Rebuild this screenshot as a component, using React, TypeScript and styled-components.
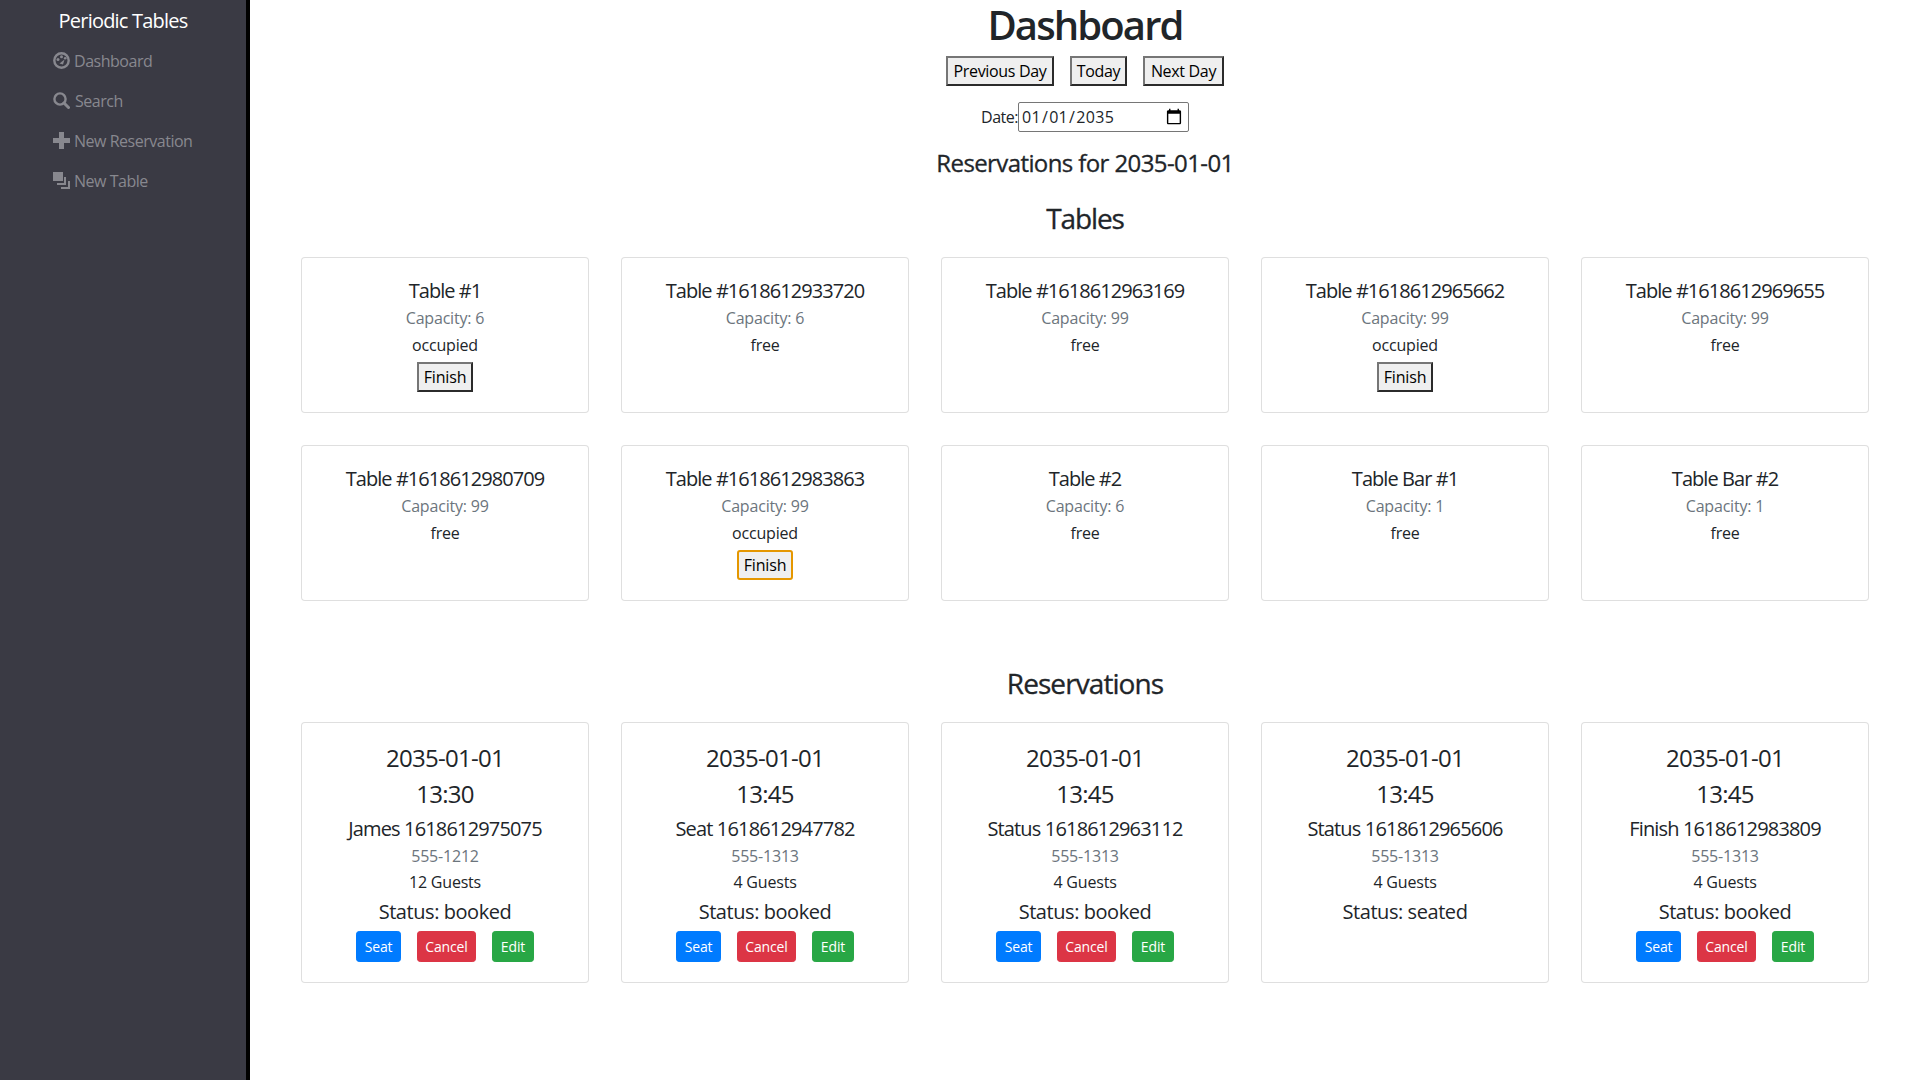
import React from 'react';
import styled, { createGlobalStyle } from 'styled-components';

const tables = [
    { name: '#1', capacity: 6, occupied: true },
    { name: '#1618612933720', capacity: 6 },
    { name: '#1618612963169', capacity: 99 },
    { name: '#1618612965662', capacity: 99, occupied: true },
    { name: '#1618612969655', capacity: 99 },
    { name: '#1618612980709', capacity: 99 },
    { name: '#1618612983863', capacity: 99, occupied: true, focused: true },
    { name: '#2', capacity: 6 },
    { name: 'Bar #1', capacity: 1 },
    { name: 'Bar #2', capacity: 1 },
];

const reservations = [
    { time: '13:30', name: 'James 1618612975075', phone: '555-1212', guests: 12, status: 'booked' },
    { time: '13:45', name: 'Seat 1618612947782', phone: '555-1313', guests: 4, status: 'booked' },
    { time: '13:45', name: 'Status 1618612963112', phone: '555-1313', guests: 4, status: 'booked' },
    { time: '13:45', name: 'Status 1618612965606', phone: '555-1313', guests: 4, status: 'seated' },
    { time: '13:45', name: 'Finish 1618612983809', phone: '555-1313', guests: 4, status: 'booked' },
];

const DashboardIcon = () => (
    <svg width="17" height="17" viewBox="0 0 17 17">
        <circle cx="8.5" cy="8.5" r="7.2" fill="none" stroke="currentColor" strokeWidth="2.4" />
        <circle cx="5" cy="7.5" r="1.5" fill="currentColor" />
        <circle cx="8.5" cy="4.8" r="1.5" fill="currentColor" />
        <circle cx="12.2" cy="6.2" r="1.3" fill="currentColor" />
        <path d="M6.5 11.5 L11.5 7.5 L10 12.5 Z" fill="currentColor" />
    </svg>
);

const SearchIcon = () => (
    <svg width="17" height="17" viewBox="0 0 17 17">
        <circle cx="7" cy="7" r="5.6" fill="none" stroke="currentColor" strokeWidth="2.4" />
        <path d="M11 11 L15.5 15.5" stroke="currentColor" strokeWidth="3" strokeLinecap="round" />
    </svg>
);

const PlusIcon = () => (
    <svg width="17" height="17" viewBox="0 0 17 17">
        <path d="M6 0h5v6h6v5h-6v6H6v-6H0V6h6z" fill="currentColor" />
    </svg>
);

const LayersIcon = () => (
    <svg width="17" height="17" viewBox="0 0 17 17">
        <path d="M0 0h10v9H0z" fill="currentColor" />
        <path d="M11 5h2v8H4v-2h7z" fill="currentColor" />
        <path d="M15 9h2v8H8v-2h7z" fill="currentColor" />
    </svg>
);

const navItems = [
    { label: 'Dashboard', icon: <DashboardIcon /> },
    { label: 'Search', icon: <SearchIcon />, gap: 5 },
    { label: 'New Reservation', icon: <PlusIcon /> },
    { label: 'New Table', icon: <LayersIcon /> },
];

const App: React.FC = () => {
    return (
        <Layout>
            <GlobalStyle />
            <Sidebar>
                <Brand>Periodic Tables</Brand>
                <Nav>
                    {navItems.map(item => (
                        <NavItem key={item.label} $gap={item.gap}>
                            {item.icon}
                            <span>{item.label}</span>
                        </NavItem>
                    ))}
                </Nav>
            </Sidebar>
            <Main>
                <PageTitle>Dashboard</PageTitle>
                <DayButtons>
                    <PlainButton $width={108}>Previous Day</PlainButton>
                    <PlainButton $width={57}>Today</PlainButton>
                    <PlainButton $width={81}>Next Day</PlainButton>
                </DayButtons>
                <DateRow>
                    <DateLabel htmlFor="date">Date:</DateLabel>
                    <DateInput id="date" type="date" defaultValue="2035-01-01" />
                </DateRow>
                <DayTitle>Reservations for 2035-01-01</DayTitle>
                <SectionTitle>Tables</SectionTitle>
                <CardGrid>
                    {tables.map(table => (
                        <TableCard key={table.name}>
                            <CardTitle>Table {table.name}</CardTitle>
                            <TableMuted>Capacity: {table.capacity}</TableMuted>
                            <CardLine>{table.occupied ? 'occupied' : 'free'}</CardLine>
                            {table.occupied && <FinishButton $focused={table.focused}>Finish</FinishButton>}
                        </TableCard>
                    ))}
                </CardGrid>
                <ReservationTitle>Reservations</ReservationTitle>
                <CardGrid>
                    {reservations.map(res => (
                        <ReservationCard key={res.name}>
                            <DateText>2035-01-01</DateText>
                            <DateText>{res.time}</DateText>
                            <ResName>{res.name}</ResName>
                            <Phone>{res.phone}</Phone>
                            <CardLine>{res.guests} Guests</CardLine>
                            <Status>Status: {res.status}</Status>
                            {res.status === 'booked' && (
                                <Actions>
                                    <ActionButton $color="#007bff" $width={45}>Seat</ActionButton>
                                    <ActionButton $color="#dc3545" $width={59}>Cancel</ActionButton>
                                    <ActionButton $color="#28a745" $width={42}>Edit</ActionButton>
                                </Actions>
                            )}
                        </ReservationCard>
                    ))}
                </CardGrid>
            </Main>
        </Layout>
    );
}

const GlobalStyle = createGlobalStyle`
    html, body, #root {
        margin: 0;
        height: 100%;
    }
    body {
        font-family: "Open Sans", "Noto Sans", sans-serif;
        font-size: 16px;
        line-height: 24px;
        letter-spacing: -0.02em;
        color: #212529;
        background: #fff;
    }
`;

const Layout = styled.div`
    width: 100%;
    height: 100%;
    display: flex;
    overflow: hidden;
`;

const Sidebar = styled.div`
    width: 246px;
    min-width: 246px;
    border-right: 4px solid #000;
    background-color: #3a3a44;
`;

const Brand = styled.div`
    height: 41px;
    font-size: 20px;
    line-height: 42px;
    letter-spacing: -0.04em;
    text-align: center;
    color: #fff;
`;

const Nav = styled.div`
    display: flex;
    flex-direction: column;
    padding-left: 53px;
`;

const NavItem = styled.div<{ $gap?: number }>`
    height: 40px;
    display: flex;
    align-items: center;
    gap: ${p => p.$gap ?? 4}px;
    letter-spacing: -0.03em;
    color: #88888f;
    svg {
        flex: none;
        margin-top: -2px;
    }
`;

const Main = styled.div`
    flex: 1;
    width: 0;
    display: flex;
    flex-direction: column;
    align-items: center;
`;

const PageTitle = styled.h1`
    margin: 1px 0 7px;
    font-size: 40px;
    line-height: 48px;
    font-weight: 600;
    letter-spacing: -0.047em;
`;

const DayButtons = styled.div`
    display: flex;
    gap: 16px;
`;

const PlainButton = styled.button<{ $width: number }>`
    width: ${p => p.$width}px;
    height: 30px;
    padding: 0;
    font: inherit;
    letter-spacing: -0.02em;
    line-height: 24px;
    color: #000;
    background: #efefef;
    border: 2px solid;
    border-color: #767676 #2b2b2b #2b2b2b #767676;
`;

const DateRow = styled.div`
    display: flex;
    align-items: center;
    margin-top: 16px;
`;

const DateLabel = styled.label`
    letter-spacing: -0.03em;
`;

const DateInput = styled.input`
    width: 171px;
    height: 30px;
    box-sizing: border-box;
    padding: 1px 2px;
    font: inherit;
    letter-spacing: 0.02em;
    color: #212529;
    border: 1px solid #767676;
    border-radius: 2px;
    &::-webkit-calendar-picker-indicator {
        width: 18px;
        height: 18px;
        padding: 0;
        margin: 0 3px 0 0;
    }
`;

const DayTitle = styled.h4`
    margin: 16px 0 0;
    font-size: 24px;
    line-height: 29px;
    font-weight: 500;
    letter-spacing: -0.025em;
    -webkit-text-stroke: 0.3px currentColor;
`;

const SectionTitle = styled.h3`
    margin: 24px 0 0;
    font-size: 28px;
    line-height: 34px;
    font-weight: 500;
    letter-spacing: -0.04em;
    -webkit-text-stroke: 0.3px currentColor;
`;

const ReservationTitle = styled(SectionTitle)`
    margin-top: 65px;
    letter-spacing: -0.033em;
`;

const CardGrid = styled.div`
    display: grid;
    grid-template-columns: repeat(5, 288px);
    gap: 32px;
    margin-top: 22px;
`;

const Card = styled.div`
    box-sizing: border-box;
    display: flex;
    flex-direction: column;
    align-items: center;
    padding: 21px 20px 0;
    text-align: center;
    background: #fff;
    border: 1px solid rgba(0, 0, 0, 0.125);
    border-radius: 4px;
`;

const TableCard = styled(Card)`
    height: 156px;
`;

const ReservationCard = styled(Card)`
    height: 261px;
    padding-top: 17px;
`;

const CardTitle = styled.div`
    font-size: 20px;
    line-height: 24px;
    font-weight: 500;
    letter-spacing: -0.047em;
    margin-bottom: 3px;
`;

const Muted = styled.div`
    font-size: 16px;
    font-weight: 500;
    letter-spacing: -0.012em;
    color: #6c757d;
`;

const TableMuted = styled(Muted)`
    height: 26px;
`;

const Phone = styled(Muted)`
    height: 24px;
    line-height: 22px;
`;

const CardLine = styled.div`
    height: 30px;
    line-height: 26px;
    letter-spacing: -0.012em;
    color: #212529;
`;

const FinishButton = styled.button<{ $focused?: boolean }>`
    height: 30px;
    padding: 0 5px;
    font: inherit;
    letter-spacing: -0.01em;
    color: #000;
    background: #efefef;
    border: 2px solid;
    border-color: ${p => p.$focused ? '#e59700' : '#767676 #2b2b2b #2b2b2b #767676'};
    border-radius: ${p => p.$focused ? '3px' : '0'};
`;

const DateText = styled.div`
    height: 36px;
    font-size: 24px;
    line-height: 36px;
    font-weight: 500;
    letter-spacing: -0.03em;
`;

const ResName = styled.div`
    height: 33px;
    font-size: 20px;
    line-height: 34px;
    font-weight: 500;
    letter-spacing: -0.042em;
`;

const Status = styled.div`
    margin-top: -2px;
    font-size: 20px;
    line-height: 30px;
    font-weight: 500;
    letter-spacing: -0.022em;
`;

const Actions = styled.div`
    display: flex;
    gap: 16px;
    margin-top: 4px;
`;

const ActionButton = styled.button<{ $color: string; $width: number }>`
    width: ${p => p.$width}px;
    height: 31px;
    padding: 0;
    font: inherit;
    font-size: 14px;
    letter-spacing: -0.01em;
    color: #fff;
    background: ${p => p.$color};
    border: 1px solid ${p => p.$color};
    border-radius: 3.2px;
`;

export default App;
